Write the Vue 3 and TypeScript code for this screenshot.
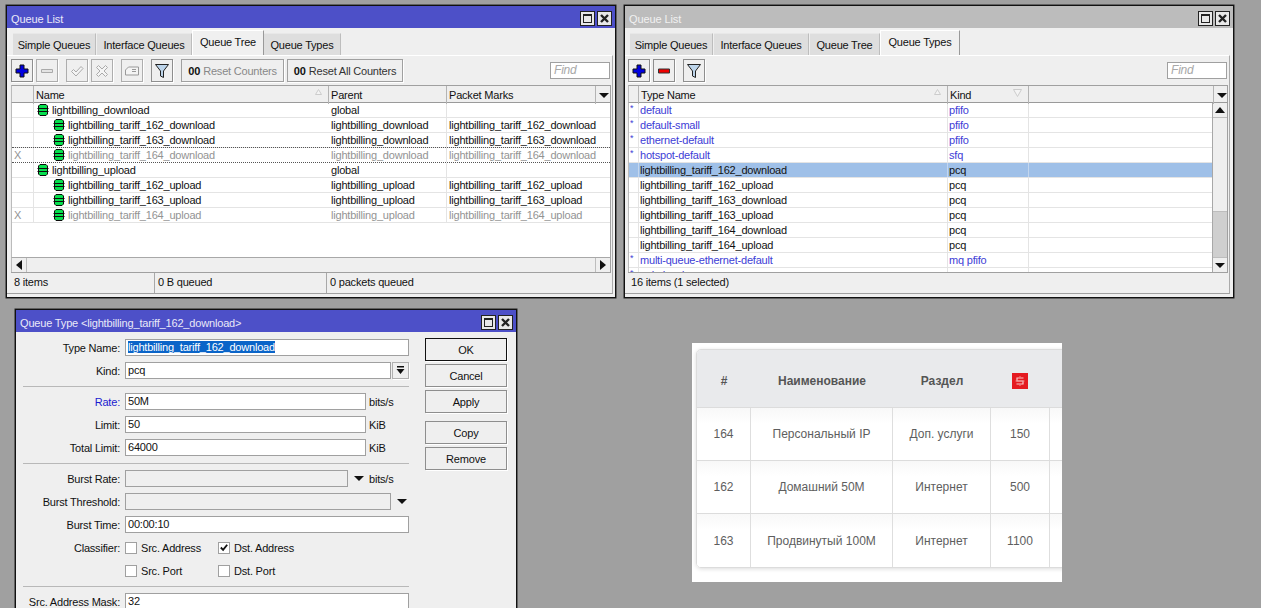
<script setup lang="ts">
interface TreeRow { mark: string; name: string; parent: string; marks: string; child: boolean; off: boolean; focus: boolean }
interface TypeRow { star: boolean; name: string; kind: string; sel: boolean }

const dl = 'lightbilling_download'
const ul = 'lightbilling_upload'
const tree: TreeRow[] = [
  { mark: '', name: dl, parent: 'global', marks: '', child: false, off: false, focus: false },
  { mark: '', name: 'lightbilling_tariff_162_download', parent: dl, marks: 'lightbilling_tariff_162_download', child: true, off: false, focus: false },
  { mark: '', name: 'lightbilling_tariff_163_download', parent: dl, marks: 'lightbilling_tariff_163_download', child: true, off: false, focus: false },
  { mark: 'X', name: 'lightbilling_tariff_164_download', parent: dl, marks: 'lightbilling_tariff_164_download', child: true, off: true, focus: true },
  { mark: '', name: ul, parent: 'global', marks: '', child: false, off: false, focus: false },
  { mark: '', name: 'lightbilling_tariff_162_upload', parent: ul, marks: 'lightbilling_tariff_162_upload', child: true, off: false, focus: false },
  { mark: '', name: 'lightbilling_tariff_163_upload', parent: ul, marks: 'lightbilling_tariff_163_upload', child: true, off: false, focus: false },
  { mark: 'X', name: 'lightbilling_tariff_164_upload', parent: ul, marks: 'lightbilling_tariff_164_upload', child: true, off: true, focus: false },
]
const types: TypeRow[] = [
  { star: true, name: 'default', kind: 'pfifo', sel: false },
  { star: true, name: 'default-small', kind: 'pfifo', sel: false },
  { star: true, name: 'ethernet-default', kind: 'pfifo', sel: false },
  { star: true, name: 'hotspot-default', kind: 'sfq', sel: false },
  { star: false, name: 'lightbilling_tariff_162_download', kind: 'pcq', sel: true },
  { star: false, name: 'lightbilling_tariff_162_upload', kind: 'pcq', sel: false },
  { star: false, name: 'lightbilling_tariff_163_download', kind: 'pcq', sel: false },
  { star: false, name: 'lightbilling_tariff_163_upload', kind: 'pcq', sel: false },
  { star: false, name: 'lightbilling_tariff_164_download', kind: 'pcq', sel: false },
  { star: false, name: 'lightbilling_tariff_164_upload', kind: 'pcq', sel: false },
  { star: true, name: 'multi-queue-ethernet-default', kind: 'mq pfifo', sel: false },
  { star: true, name: 'only-hardware-queue', kind: 'none', sel: false },
]
const tabs = ['Simple Queues', 'Interface Queues', 'Queue Tree', 'Queue Types']
const prices = [
  { id: 164, name: 'Персональный IP', sec: 'Доп. услуги', price: 150 },
  { id: 162, name: 'Домашний 50M', sec: 'Интернет', price: 500 },
  { id: 163, name: 'Продвинутый 100M', sec: 'Интернет', price: 1100 },
]
</script>

<template>
  <div class="desk">
    <!-- Queue Tree window -->
    <section class="win win-tree">
      <header class="title active">
        <span>Queue List</span>
        <div class="tbtns">
          <button class="tb"><i class="maxi"></i></button>
          <button class="tb"><svg width="11" height="11" viewBox="0 0 11 11"><path d="M2 2l7 7M9 2l-7 7" stroke="#222" stroke-width="2.4" fill="none"/></svg></button>
        </div>
      </header>
      <nav class="tabs">
        <span v-for="t in tabs" :key="t" class="tab" :class="{ on: t === 'Queue Tree' }">{{ t }}</span>
      </nav>
      <div class="pane">
        <div class="toolbar">
          <button class="ib"><svg width="14" height="14" viewBox="0 0 14 14"><path d="M5 1h4v4h4v4H9v4H5V9H1V5h4z" fill="#0000e0" stroke="#111"/></svg></button>
          <button class="ib dis"><svg width="14" height="14" viewBox="0 0 14 14"><path d="M1.500 5.500h11v3h-11z" fill="#e4e4e4" stroke="#aaa"/></svg></button>
          <button class="ib dis m1"><svg width="14" height="14" viewBox="0 0 14 14"><path d="M1.500 7.500l2-2 2.500 2.500 5-5.500 2 2-7 7.500z" fill="#f4f4f4" stroke="#aaa"/></svg></button>
          <button class="ib dis"><svg width="14" height="14" viewBox="0 0 14 14"><path d="M3.500 1.500l3.500 3.500 3.500-3.500 2 2-3.500 3.500 3.500 3.500-2 2-3.500-3.500-3.500 3.500-2-2 3.500-3.500-3.500-3.500z" fill="#f4f4f4" stroke="#aaa"/></svg></button>
          <button class="ib dis m1"><svg width="14" height="14" viewBox="0 0 14 14"><path d="M.5 6l3-3h10v8H.5z" fill="#f4f4f4" stroke="#999"/><path d="M7 5.500h4M7 7.500h4" stroke="#999"/></svg></button>
          <button class="ib m1"><svg width="14" height="16" viewBox="0 0 14 16"><path d="M.5 1.500h13L8.500 8v6.500l-3-1.500V8z" fill="#bcd4ea" stroke="#222"/></svg></button>
          <button class="tx m1"><b>00</b> Reset Counters</button>
          <button class="tx"><b>00</b> <em>Reset All Counters</em></button>
          <span class="find">Find</span>
        </div>
        <div class="list">
          <div class="thead tree-grid">
            <span class="th"></span>
            <span class="th">Name<svg class="sort" width="7" height="6" viewBox="0 0 7 6"><path d="M3.500.5l3 5h-6z" fill="#f4f4f4" stroke="#ccc"/></svg></span>
            <span class="th">Parent</span>
            <span class="th">Packet Marks</span>
            <span class="th drop"><i class="tri"></i></span>
          </div>
          <div class="tbody">
            <div v-for="r in tree" :key="r.name" class="row tree-grid" :class="{ off: r.off, focus: r.focus }">
              <span class="td mark">{{ r.mark }}</span>
              <span class="td name" :class="{ child: r.child }">
                <svg width="12" height="12" viewBox="0 0 12 12" class="q"><path d="M3 .5h6L10.500 2v8L9 11.500H3L1.500 10V2z" fill="#06e04e" stroke="#0b0b0b"/><path d="M.5 4.500h11M.5 7.500h11" stroke="#0b0b0b"/></svg>
                {{ r.name }}
              </span>
              <span class="td">{{ r.parent }}</span>
              <span class="td wide">{{ r.marks }}</span>
            </div>
          </div>
          <div class="hscroll">
            <span class="sb-btn"><i class="tri-l"></i></span>
            <span class="sb-track"></span>
            <span class="sb-btn"><i class="tri-r"></i></span>
          </div>
          <div class="status s-tree">
            <span>8 items</span><span>0 B queued</span><span>0 packets queued</span>
          </div>
        </div>
      </div>
    </section>

    <!-- Queue Types window -->
    <section class="win win-types">
      <header class="title idle">
        <span>Queue List</span>
        <div class="tbtns">
          <button class="tb"><i class="maxi"></i></button>
          <button class="tb"><svg width="11" height="11" viewBox="0 0 11 11"><path d="M2 2l7 7M9 2l-7 7" stroke="#222" stroke-width="2.4" fill="none"/></svg></button>
        </div>
      </header>
      <nav class="tabs">
        <span v-for="t in tabs" :key="t" class="tab" :class="{ on: t === 'Queue Types' }">{{ t }}</span>
      </nav>
      <div class="pane">
        <div class="toolbar">
          <button class="ib"><svg width="14" height="14" viewBox="0 0 14 14"><path d="M5 1h4v4h4v4H9v4H5V9H1V5h4z" fill="#0000e0" stroke="#111"/></svg></button>
          <button class="ib"><svg width="14" height="14" viewBox="0 0 14 14"><path d="M1.500 5h11v4h-11z" fill="#ee0000" stroke="#333"/></svg></button>
          <button class="ib m1"><svg width="14" height="16" viewBox="0 0 14 16"><path d="M.5 1.500h13L8.500 8v6.500l-3-1.500V8z" fill="#bcd4ea" stroke="#222"/></svg></button>
          <span class="find">Find</span>
        </div>
        <div class="list">
          <div class="thead type-grid">
            <span class="th"></span>
            <span class="th">Type Name<svg class="sort" width="7" height="6" viewBox="0 0 7 6"><path d="M3.500.5l3 5h-6z" fill="#f4f4f4" stroke="#ccc"/></svg></span>
            <span class="th">Kind<svg class="sort s2" width="9" height="8" viewBox="0 0 9 8"><path d="M.5.500h8l-4 7z" fill="#f4f4f4" stroke="#ccc"/></svg></span>
            <span class="th"></span>
            <span class="th drop"><i class="tri"></i></span>
          </div>
          <div class="tbody types-body">
            <div class="type-rows">
              <div v-for="r in types" :key="r.name" class="row type-grid2" :class="{ sel: r.sel, sys: r.star }">
                <span class="td star">{{ r.star ? '*' : '' }}</span>
                <span class="td">{{ r.name }}</span>
                <span class="td">{{ r.kind }}</span>
                <span class="td wide"></span>
              </div>
            </div>
            <div class="vscroll">
              <span class="sb-btn v"><i class="tri-u"></i></span>
              <span class="sb-thumb"></span>
              <span class="sb-rest"></span>
              <span class="sb-btn v"><i class="tri-d"></i></span>
            </div>
          </div>
          <div class="status s-types"><span>16 items (1 selected)</span></div>
        </div>
      </div>
    </section>

    <!-- Queue Type dialog -->
    <section class="win win-dialog">
      <header class="title active dlg">
        <span>Queue Type &lt;lightbilling_tariff_162_download&gt;</span>
        <div class="tbtns">
          <button class="tb"><i class="maxi"></i></button>
          <button class="tb"><svg width="11" height="11" viewBox="0 0 11 11"><path d="M2 2l7 7M9 2l-7 7" stroke="#222" stroke-width="2.4" fill="none"/></svg></button>
        </div>
      </header>
      <div class="dlg-body">
        <form class="form" @submit.prevent>
          <div class="fr"><label>Type Name:</label><span class="inp grow"><mark>lightbilling_tariff_162_download</mark></span></div>
          <div class="fr"><label>Kind:</label><span class="inp w-kind">pcq</span><span class="mini"><svg width="9" height="10" viewBox="0 0 9 10"><path d="M1 0h7v1.500H1zM.5 3h8L4.500 8z" fill="#111"/></svg></span></div>
          <hr />
          <div class="fr"><label class="blue">Rate:</label><span class="inp w-rate">50M</span><span class="unit">bits/s</span></div>
          <div class="fr"><label>Limit:</label><span class="inp w-rate">50</span><span class="unit kib">KiB</span></div>
          <div class="fr"><label>Total Limit:</label><span class="inp w-rate">64000</span><span class="unit kib">KiB</span></div>
          <hr />
          <div class="fr"><label>Burst Rate:</label><span class="inp dis w-burst"></span><i class="tri big a1"></i><span class="unit u2">bits/s</span></div>
          <div class="fr"><label>Burst Threshold:</label><span class="inp dis w-kind"></span><i class="tri big a2"></i></div>
          <div class="fr"><label>Burst Time:</label><span class="inp grow">00:00:10</span></div>
          <div class="fr">
            <label>Classifier:</label>
            <span class="cb"><i class="box"></i>Src. Address</span>
            <span class="cb"><i class="box"><svg width="11" height="11" viewBox="0 0 11 11"><path d="M2 5.500l2.500 2.500L9 2.500" stroke="#111" stroke-width="2" fill="none"/></svg></i>Dst. Address</span>
          </div>
          <div class="fr">
            <label></label>
            <span class="cb"><i class="box"></i>Src. Port</span>
            <span class="cb"><i class="box"></i>Dst. Port</span>
          </div>
          <hr />
          <div class="fr"><label>Src. Address Mask:</label><span class="inp grow">32</span></div>
        </form>
        <div class="actions">
          <button class="db def">OK</button>
          <button class="db">Cancel</button>
          <button class="db">Apply</button>
          <button class="db sp">Copy</button>
          <button class="db">Remove</button>
        </div>
      </div>
    </section>

    <!-- Price table -->
    <section class="shot">
      <div class="ptable">
        <div class="pgrid phead">
          <span>#</span><span>Наименование</span><span>Раздел</span>
          <span><i class="coin"><svg width="12" height="12" viewBox="0 0 12 12"><path d="M9.500 3H3v3h6v3H2.500" stroke="#f7c9c9" stroke-width="1.200" fill="none"/><path d="M1.500 6h9M6 1v1.500M6 9.500V11" stroke="#f08c8c" stroke-width="1" fill="none"/></svg></i></span>
          <span></span>
        </div>
        <div v-for="p in prices" :key="p.id" class="pgrid prow">
          <span>{{ p.id }}</span><span>{{ p.name }}</span><span>{{ p.sec }}</span><span>{{ p.price }}</span><span></span>
        </div>
      </div>
    </section>
  </div>
</template>

<style>
html, body { margin: 0; background: #a0a0a0; }
</style>

<style scoped>
.desk {
  position: relative;
  width: 1261px;
  height: 608px;
  overflow: hidden;
  background: #a0a0a0;
  font-family: "Liberation Sans", Arial, sans-serif;
  font-size: 11px;
  letter-spacing: -0.2px;
  color: #111;
}
button { font: inherit; letter-spacing: inherit; color: inherit; padding: 0; margin: 0; cursor: default; }
.win {
  position: absolute;
  box-sizing: border-box;
  border: 1px solid #111;
  background: #efefef;
  display: flex;
  flex-direction: column;
  box-shadow: 0 0 0 0.5px #222;
}
.win-tree { left: 6px; top: 5px; width: 610px; height: 293px; }
.win-types { left: 624px; top: 5px; width: 610px; height: 293px; }
.win-dialog { left: 15px; top: 309px; width: 502px; height: 320px; }

.title {
  box-sizing: border-box;
  height: 22px;
  flex: none;
  display: flex;
  align-items: center;
  justify-content: space-between;
  padding: 3px 3px 0 4px;
  font-size: 11px;
  letter-spacing: -0.1px;
}
.title.active { background: #4d50c8; color: #e9e9f8; }
.title.idle { background: #bcbcbc; color: #f1f1f1; }
.tbtns { display: flex; gap: 2px; margin-top: -1px; }
.tb {
  width: 15px;
  height: 15px;
  box-sizing: border-box;
  border: 1px solid #222;
  background: #e8e8e8;
  display: flex;
  align-items: center;
  justify-content: center;
}
.maxi { display: block; width: 9px; height: 9px; border: 1px solid #222; border-top-width: 2px; box-sizing: border-box; }

.tabs { height: 27px; flex: none; display: flex; align-items: flex-end; }
.win-tree .tabs { padding-left: 6px; }
.win-types .tabs { padding-left: 5px; }
.tab {
  box-sizing: border-box;
  height: 22px;
  width: 83px;
  margin-right: 1px;
  background: #dedede;
  border-top: 1px solid #e8e8e8;
  border-right: 1px solid #bdbdbd;
  display: flex;
  align-items: center;
  justify-content: center;
  font-size: 11px;
}
.tab:nth-child(2) { width: 95px; }
.win-tree .tab:nth-child(2) { margin-right: 0; }
.win-tree .tab:nth-child(3) { width: 72px; }
.win-tree .tab:nth-child(4) { width: 77px; }
.win-types .tab:nth-child(3) { width: 70px; margin-right: 0; }
.win-types .tab:nth-child(4) { width: 80px; }
.tab.on {
  height: 25px;
  background: #f0f0f0;
  border-top: 1px solid #fff;
  border-right: 1px solid #999;
  border-left: 1px solid #fff;
  margin-right: 0;
  padding-bottom: 3px;
}

.pane {
  flex: 1;
  min-height: 0;
  box-sizing: border-box;
  display: flex;
  flex-direction: column;
  border-top: 1px solid #fff;
  border-right: 1px solid #aaa;
  border-bottom: 1px solid #a0a0a0;
  margin-bottom: 3px;
  padding-top: 3px;
  padding-right: 1px;
}
.win-tree .pane { padding-left: 4px; margin-right: 2px; }
.win-types .pane { padding-left: 3px; margin-right: 3px; }

.toolbar { height: 23px; flex: none; display: flex; gap: 3px; align-items: center; margin-bottom: 3px; }
.ib, .tx {
  box-sizing: border-box;
  height: 23px;
  border: 1px solid #8e8e8e;
  background: #efefef;
  box-shadow: 1px 1px 0 #fff;
  display: flex;
  align-items: center;
  justify-content: center;
}
.ib { width: 22px; }
.ib.dis { border-color: #adadad; }
.m1 { margin-left: 5px; }
.tx { padding: 0 5px; gap: 3px; color: #888; border-color: #a0a0a0; white-space: nowrap; width: 103px; }
.tx + .tx { width: 116px; color: #333; }
.tx b { color: #111; font-size: 11px; font-weight: 700; letter-spacing: -0.1px; }
.tx em { font-style: normal; }
.find {
  margin-left: auto;
  margin-right: 1px;
  width: 60px;
  height: 17px;
  box-sizing: border-box;
  border: 1px solid #a0a0a0;
  background: #fff;
  color: #a8a8a8;
  font-style: italic;
  font-size: 12px;
  padding-left: 3px;
  line-height: 15px;
}

.list { flex: 1; min-height: 0; width: 600px; display: flex; flex-direction: column; }
.tree-grid { display: grid; grid-template-columns: 22px 295px 118px 149px 16px; }
.type-grid { display: grid; grid-template-columns: 10px 309px 81px 185px 15px; }
.type-grid2 { display: grid; grid-template-columns: 10px 309px 81px 185px; }
.thead {
  height: 18px;
  flex: none;
  box-sizing: border-box;
  border-top: 1px solid #a0a0a0;
  border-bottom: 1px solid #9a9a9a;
  background: #efefef;
  border-left: 1px solid #bbb;
  border-right: 1px solid #a0a0a0;
}
.th {
  position: relative;
  box-sizing: border-box;
  border-right: 1px solid #b4b4b4;
  padding-left: 2px;
  line-height: 18px;
  white-space: nowrap;
}
.th:last-child { border-right: 0; }
.sort { position: absolute; right: 6px; top: 3px; }
.drop { display: flex; align-items: center; justify-content: center; padding: 0; }
.tri, .tri-d { display: block; width: 0; height: 0; border-left: 5px solid transparent; border-right: 5px solid transparent; border-top: 5px solid #111; }
.tri.big { flex: none; }
.tri-u { display: block; width: 0; height: 0; border-left: 5px solid transparent; border-right: 5px solid transparent; border-bottom: 6px solid #111; }
.tri-l { display: block; width: 0; height: 0; border-top: 5px solid transparent; border-bottom: 5px solid transparent; border-right: 6px solid #111; }
.tri-r { display: block; width: 0; height: 0; border-top: 5px solid transparent; border-bottom: 5px solid transparent; border-left: 6px solid #111; }

.tbody { flex: 1; min-height: 0; background: #fff; overflow: hidden; border-left: 1px solid #bbb; border-right: 1px solid #a0a0a0; }
.row { height: 15px; box-sizing: border-box; border-bottom: 1px solid #e4e4e4; }
.td {
  box-sizing: border-box;
  border-right: 1px solid #e4e4e4;
  padding-left: 2px;
  line-height: 14px;
  white-space: nowrap;
  overflow: hidden;
}
.win-types .td { padding-left: 1px; }
.win-tree .row { display: grid; grid-template-columns: 22px 295px 118px 1fr; }
.win-tree .row .td:nth-child(2) { border-right: 0; }
.wide { border-right: 0; }
.mark { color: #8a8a8a; }
.win-tree .name { display: flex; align-items: center; gap: 3px; padding-left: 3px; }
.win-tree .name.child { padding-left: 19px; }
.q { flex: none; }
.off .td { color: #939393; }
.focus { position: relative; border-bottom: 1px dotted #555; }
.focus::before { content: ""; position: absolute; left: 0; right: 0; top: -1px; border-top: 1px dotted #555; }

.hscroll { height: 15px; flex: none; box-sizing: border-box; border-top: 1px solid #a8a8a8; display: flex; background: #efefef; border-left: 1px solid #bbb; border-right: 1px solid #a0a0a0; }
.sb-btn { width: 15px; flex: none; box-sizing: border-box; background: #efefef; border-right: 1px solid #bdbdbd; display: flex; align-items: center; justify-content: center; }
.sb-btn:last-child { border-right: 0; border-left: 1px solid #bdbdbd; }
.sb-track { flex: 1; }

.status { height: 21px; flex: none; box-sizing: border-box; border-top: 1px solid #a0a0a0; display: grid; line-height: 19px; background: #efefef; }
.s-tree { grid-template-columns: 144px 172px 1fr; }
.s-types { grid-template-columns: 1fr; }
.status span { padding-left: 3px; border-right: 1px solid #a8a8a8; }
.status span:last-child { border-right: 0; }

.types-body { display: flex; }
.type-rows { flex: 1; min-width: 0; }
.win-types .star { padding-left: 1px; font-size: 9px; line-height: 11px; }
.sys .td { color: #3d3dd6; }
.sel { background: #9fc0e8; }
.sel .td { border-right-color: #c3d6ee; color: #111; }
.vscroll { width: 15px; flex: none; display: flex; flex-direction: column; border-left: 1px solid #a8a8a8; box-sizing: border-box; background: #efefef; }
.sb-btn.v, .sb-btn.v:last-child { width: auto; height: 15px; border: 0; border-bottom: 1px solid #bdbdbd; }
.sb-btn.v:last-child { border-bottom: 0; border-top: 1px solid #bdbdbd; }
.sb-thumb { height: 94px; box-sizing: border-box; border-bottom: 1px solid #bdbdbd; }
.sb-rest { flex: 1; background: #cfcfcf; }

.dlg-body { display: flex; align-items: flex-start; padding: 6px 0 0 7px; }
.title.dlg { letter-spacing: -0.17px; }
.form { width: 386px; flex: none; display: flex; flex-direction: column; gap: 6px; padding-top: 1px; }
.fr { display: flex; height: 17px; align-items: center; }
.fr label { width: 97px; margin-right: 5px; flex: none; text-align: right; white-space: nowrap; }
.blue { color: #1a1ad0; }
.inp {
  box-sizing: border-box;
  height: 17px;
  border: 1px solid #a0a0a0;
  background: #fff;
  padding-left: 2px;
  line-height: 15px;
  white-space: nowrap;
  flex: none;
}
.inp.grow { width: 284px; }
.inp.dis { background: #efefef; }
.w-kind { width: 266px; }
.w-rate { width: 241px; }
.w-burst { width: 223px; }
mark { background: #0a64c8; color: #fff; }
.mini { width: 17px; height: 17px; margin-left: 1px; box-sizing: border-box; border: 1px solid #b0b0b0; display: flex; align-items: center; justify-content: center; box-shadow: 1px 1px 0 #fff; }
.unit { margin-left: 3px; }
.unit.u2 { margin-left: 5px; }
.a1, .a2 { margin-left: 6px; }
hr { margin: 1px 0 0; border: 0; height: 1px; background: #b8b8b8; width: 100%; }
.cb { display: flex; align-items: center; gap: 4px; width: 93px; flex: none; white-space: nowrap; }
.box { box-sizing: border-box; width: 12px; height: 12px; border: 1px solid #a0a0a0; background: #fff; display: flex; align-items: center; justify-content: center; flex: none; }
.actions { margin-left: 16px; display: flex; flex-direction: column; gap: 3px; }
.db { width: 82px; height: 23px; box-sizing: border-box; border: 1px solid #8e8e8e; background: #efefef; box-shadow: 1px 1px 0 #fff; font-size: 11px; }
.db.def { border-color: #111; }
.db.sp { margin-top: 5px; }

.shot {
  position: absolute;
  left: 692px;
  top: 343px;
  width: 370px;
  height: 239px;
  background: #fff;
  overflow: hidden;
  letter-spacing: 0;
  font-size: 12px;
  color: #5e5e5e;
}
.ptable {
  margin: 6px 0 0 4px;
  width: 400px;
  box-sizing: border-box;
  border: 1px solid #dcdcdc;
  border-radius: 5px;
  overflow: hidden;
  box-shadow: 0 1px 4px rgba(0,0,0,.14);
}
.pgrid { display: grid; grid-template-columns: 54px 142px 98px 59px 1fr; }
.pgrid span { display: flex; align-items: center; justify-content: center; box-sizing: border-box; }
.phead { box-sizing: border-box; height: 58px; padding-top: 4px; background: #e9eaec; font-weight: 700; color: #555; border-bottom: 1px solid #dcdcdc; }
.prow { box-sizing: border-box; height: 53px; background: linear-gradient(#f8f8f8, #fff 30%); border-bottom: 1px solid #dcdcdc; }
.prow:last-child { border-bottom: 0; }
.prow span { border-right: 1px solid #dedede; }
.coin { width: 16px; height: 16px; margin-left: -2px; background: #e51a20; display: flex; align-items: center; justify-content: center; }
</style>
